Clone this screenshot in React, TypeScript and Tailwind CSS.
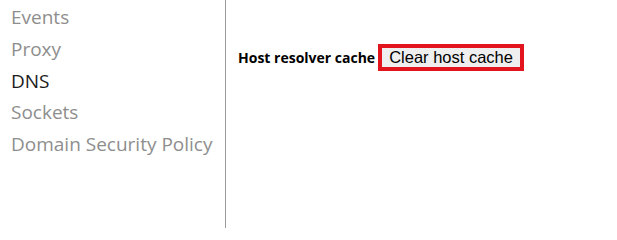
import React from "react";

const items = [
  { label: "Events", active: false },
  { label: "Proxy", active: false },
  { label: "DNS", active: true },
  { label: "Sockets", active: false },
  { label: "Domain Security Policy", active: false },
];

export default function App() {
  return (
    <div className="flex h-[228px] w-[617px] bg-white overflow-hidden">
      {/* Sidebar */}
      <div
        className="w-[226px] shrink-0 border-r border-[#9a9a9a] pl-[11px] pt-[2px]"
        style={{ fontFamily: '"Open Sans", "Noto Sans", sans-serif' }}
      >
        {items.map((item) => (
          <div
            key={item.label}
            className={`text-[19px] leading-[31.8px] whitespace-nowrap ${
              item.active ? "text-[#1a1a1a]" : "text-[#8e8e8e]"
            }`}
          >
            {item.label}
          </div>
        ))}
      </div>

      {/* DNS panel */}
      <div className="flex-1 pl-[12px] pt-[44px]">
        <div className="flex items-center">
          <span
            className="text-[14px] font-bold text-black mr-[3px]"
            style={{ fontFamily: '"Open Sans", "Noto Sans", sans-serif' }}
          >
            Host resolver cache
          </span>
          <span className="border-[4px] border-[#e2141e] flex">
            <button
              className="bg-[#efefef] h-[19px] px-[7px] text-[16.5px] leading-[19px] text-black"
              style={{ fontFamily: '"Liberation Sans", Arial, sans-serif' }}
            >
              Clear host cache
            </button>
          </span>
        </div>
      </div>
    </div>
  );
}
